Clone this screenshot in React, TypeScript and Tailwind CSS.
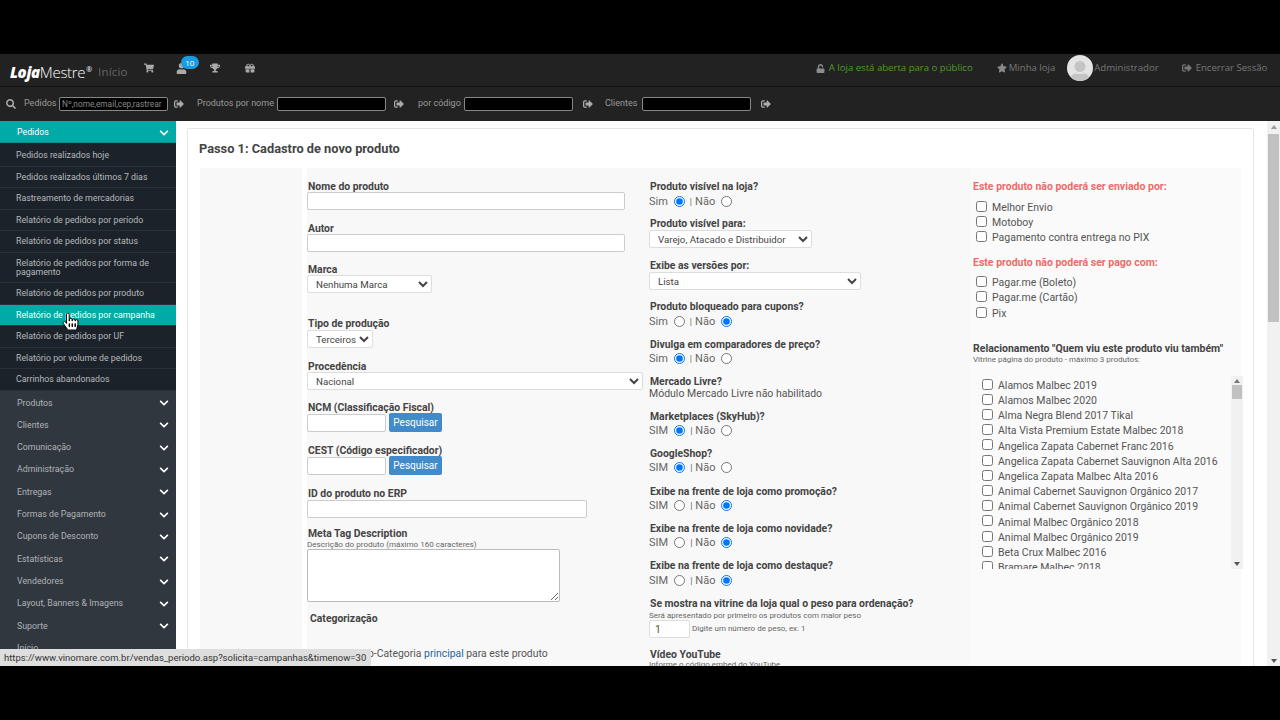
import React from "react";
import { FaShoppingCart, FaTrophy, FaGift, FaUser, FaUnlock, FaStar, FaSearch, FaSignOutAlt, FaChevronDown, FaHandPointer } from "react-icons/fa";

const subItems: [string, string][] = [
  ["Pedidos realizados hoje", "h-[22px]"],
  ["Pedidos realizados últimos 7 dias", "h-[21px]"],
  ["Rastreamento de mercadorias", "h-[22px]"],
  ["Relatório de pedidos por período", "h-[21px]"],
  ["Relatório de pedidos por status", "h-[22px]"],
  ["Relatório de pedidos por forma de pagamento", "h-[30px]"],
  ["Relatório de pedidos por produto", "h-[22px]"],
  ["Relatório de pedidos por campanha", "h-[21px]"],
  ["Relatório de pedidos por UF", "h-[22px]"],
  ["Relatório por volume de pedidos", "h-[21px]"],
  ["Carrinhos abandonados", "h-[22px]"],
];
const cats = ["Produtos", "Clientes", "Comunicação", "Administração", "Entregas", "Formas de Pagamento", "Cupons de Desconto", "Estatísticas", "Vendedores", "Layout, Banners & Imagens", "Suporte"];
const products = ["Alamos Malbec 2019", "Alamos Malbec 2020", "Alma Negra Blend 2017 Tikal", "Alta Vista Premium Estate Malbec 2018", "Angelica Zapata Cabernet Franc 2016", "Angelica Zapata Cabernet Sauvignon Alta 2016", "Angelica Zapata Malbec Alta 2016", "Animal Cabernet Sauvignon Orgânico 2017", "Animal Cabernet Sauvignon Orgânico 2019", "Animal Malbec Orgânico 2018", "Animal Malbec Orgânico 2019", "Beta Crux Malbec 2016", "Bramare Malbec 2018"];

function Label({ children }: { children: React.ReactNode }) {
  return <div className="h-[12px] pt-[1px] pl-[1px] box-content -mb-[1px] leading-[12px] text-[10.4px] font-bold text-[#444] whitespace-nowrap">{children}</div>;
}
function TextBox({ w, cls = "" }: { w: string; cls?: string }) {
  return <input className={`block h-[18px] ${w} ${cls} bg-white border border-[#ccc] rounded-[2px]`} />;
}
function Sel({ w, text, cls = "" }: { w: string; text: string; cls?: string }) {
  return (
    <select className={`block h-[18px] ${w} ${cls} bg-white rounded-[2px] border border-[#ddd] text-[9.7px] text-[#444] pl-[4px]`}>
      <option>{text}</option>
    </select>
  );
}
function Radio({ label, name, first, rowCls }: { label: string; name: string; first: boolean; rowCls: string }) {
  return (
    <div className={`flex items-center h-[15px] text-[11px] text-[#666] ${rowCls}`}>
      <span>{label}</span>
      <input type="radio" name={name} defaultChecked={first} className="w-[11px] h-[11px] ml-[6px] mr-[5px] mb-[3px]" />
      <span className="text-[9px] mr-[3px]">|</span>
      <span>Não</span>
      <input type="radio" name={name} defaultChecked={!first} className="w-[11px] h-[11px] ml-[6px] mb-[3px]" />
    </div>
  );
}
function Check({ label }: { label: string }) {
  return (
    <div className="flex items-center h-[15.2px] text-[10.5px] text-[#555] whitespace-nowrap">
      <input type="checkbox" className="w-[11px] h-[11px] ml-[3px] mr-[5px] mb-[3px]" />
      <span>{label}</span>
    </div>
  );
}
function Go({ cls = "" }: { cls?: string }) {
  return <FaSignOutAlt className={`text-[10px] text-[#aaa] ${cls}`} />;
}

export default function App() {
  return (
    <div className="relative w-[1280px] h-[720px] bg-black pt-[54px] pb-[54px] overflow-hidden font-['Roboto',sans-serif]">
      <div className="h-[33px] pb-[4px] bg-[#222] border-b border-[#111] flex items-center font-['Open_Sans',sans-serif]">
        <div className="ml-[10px] mt-[8px] w-[82px] text-[15px] leading-none text-white whitespace-nowrap tracking-[-0.3px]">
          <b className="italic font-extrabold">Loja</b><span className="font-light">Mestre</span><sup className="text-[7px] -top-[6px] ml-[1px]">®</sup>
        </div>
        <span className="ml-[6px] mt-[8px] text-[11.5px] text-[#666] tracking-[0.2px]">Início</span>
        <FaShoppingCart className="ml-[16px] text-[10px] text-[#aaa]" />
        <div className="relative ml-[22px]">
          <FaUser className="text-[11px] text-[#aaa]" />
          <span className="absolute -top-[7px] left-[5px] w-[18px] h-[13px] rounded-full bg-[#1b9ce2] text-white text-[8px] leading-[13px] text-center">10</span>
        </div>
        <FaTrophy className="ml-[23px] text-[10px] text-[#aaa]" />
        <FaGift className="ml-[25px] text-[10px] text-[#aaa]" />
        <FaUnlock className="ml-[561px] text-[9px] text-[#8c8c8c]" />
        <span className="ml-[4px] text-[9.6px] text-[#4f9a2a] whitespace-nowrap">A loja está aberta para o público</span>
        <FaStar className="ml-[24px] text-[10px] text-[#888]" />
        <span className="ml-[2px] text-[9.6px] text-[#777] whitespace-nowrap">Minha loja</span>
        <div className="ml-[12px] w-[26px] h-[26px] rounded-full bg-[#e4e4e4] overflow-hidden flex items-end justify-center">
          <FaUser className="text-[22px] text-[#c4c4c4] -mb-[2px]" />
        </div>
        <span className="ml-[1px] text-[9.6px] text-[#777]">Administrador</span>
        <FaSignOutAlt className="ml-[23px] text-[10px] text-[#777]" />
        <span className="ml-[4px] text-[9.6px] text-[#777] whitespace-nowrap">Encerrar Sessão</span>
      </div>

      <div className="h-[34px] bg-[#222] flex items-center text-[9px] text-[#999]">
        <FaSearch className="ml-[6px] text-[10px] text-[#aaa]" />
        <span className="ml-[8px] w-[35px]">Pedidos</span>
        <input readOnly value="Nº,nome,email,cep,rastrear" className="w-[109px] h-[14px] bg-black border border-[#888] rounded-[2px] text-[8.3px] text-[#888] px-[2px]" />
        <Go cls="ml-[6px]" />
        <span className="ml-[13px] w-[80px]">Produtos por nome</span>
        <input className="w-[109px] h-[14px] bg-black border border-[#888] rounded-[2px]" />
        <Go cls="ml-[8px]" />
        <span className="ml-[14px] w-[46px]">por código</span>
        <input className="w-[109px] h-[14px] bg-black border border-[#888] rounded-[2px]" />
        <Go cls="ml-[10px]" />
        <span className="ml-[12px] w-[37px]">Clientes</span>
        <input className="w-[109px] h-[14px] bg-black border border-[#888] rounded-[2px]" />
        <Go cls="ml-[10px]" />
      </div>

      <div className="flex h-[545px] overflow-hidden">
        <aside className="w-[176px] bg-[#30373e] overflow-hidden text-[8.8px]">
          <div className="h-[22px] pt-[3px] bg-[#00aaa6] border-b border-[#0a8c88] flex items-center justify-between pl-[17px] pr-[7px] text-white">
            <span>Pedidos</span>
            <FaChevronDown className="text-[10px]" />
          </div>
          <div className="bg-[#1c2229] pt-[2px]">
            {subItems.map(([t, h]) => (
              <div key={t} className={`${h} flex items-center pl-[16px] pr-[14px] leading-[9px] border-b border-[#2a3038] ${t.endsWith("campanha") ? "bg-[#00aaa6] text-white" : "text-[#b5b9bc]"}`}>
                {t}
              </div>
            ))}
          </div>
          <div className="pt-[1px]">
            {cats.map((c) => (
              <div key={c} className="h-[22.3px] flex items-center justify-between pl-[17px] pr-[7px] text-[#b0b4b8]">
                <span>{c}</span>
                <FaChevronDown className="text-[10px] text-white" />
              </div>
            ))}
            <div className="h-[22px] flex items-center pl-[17px] text-[#b0b4b8]">Início</div>
          </div>
        </aside>

        <main className="w-[1091px] bg-white pl-[11px] pr-[13px] pt-[7px]">
          <div className="h-[600px] border border-[#e6e6e6] rounded-[2px] bg-white pl-[12px] pr-[12px]">
            <h1 className="pt-[12px] h-[39px] -ml-[1px] text-[12.8px] leading-[15px] font-bold text-[#444]">Passo 1: Cadastro de novo produto</h1>
            <div className="flex h-[520px]">
              <div className="w-[102px] bg-[#f8f8f8] mr-[5px]" />
              <div className="w-[342px] bg-[#f8f8f8] pt-[12px] text-[#444]">
                <Label>Nome do produto</Label>
                <TextBox w="w-[318px]" />
                <div className="mt-[12px]"><Label>Autor</Label></div>
                <TextBox w="w-[318px]" />
                <div className="mt-[11px]"><Label>Marca</Label></div>
                <Sel w="w-[125px]" text="Nenhuma Marca" />
                <div className="mt-[24px]"><Label>Tipo de produção</Label></div>
                <Sel w="w-[66px]" text="Terceiros" cls="mt-[1px]" />
                <div className="mt-[12px]"><Label>Procedência</Label></div>
                <Sel w="w-[336px]" text="Nacional" />
                <div className="mt-[11px]"><Label>NCM (Classificação Fiscal)</Label></div>
                <div className="flex items-center h-[19px]">
                  <TextBox w="w-[79px]" />
                  <button className="ml-[3px] w-[53px] h-[19px] rounded-[2px] bg-[#428bca] text-white text-[10px]">Pesquisar</button>
                </div>
                <div className="mt-[12px]"><Label>CEST (Código especificador)</Label></div>
                <div className="flex items-center h-[19px]">
                  <TextBox w="w-[79px]" />
                  <button className="ml-[3px] w-[53px] h-[19px] rounded-[2px] bg-[#428bca] text-white text-[10px]">Pesquisar</button>
                </div>
                <div className="mt-[12px]"><Label>ID do produto no ERP</Label></div>
                <TextBox w="w-[280px]" cls="mt-[1px]" />
                <div className="mt-[9px]"><Label>Meta Tag Description</Label></div>
                <div className="h-[10px] leading-[10px] text-[8.1px] text-[#666]">Descrição do produto (máximo 160 caracteres)</div>
                <textarea className="block w-[253px] h-[53px] bg-white border border-[#bbb] rounded-[2px]" />
                <div className="mt-[10px] ml-[3px] h-[13px] leading-[13px] text-[10.4px] font-bold text-[#444]">Categorização</div>
                <div className="mt-[22px] ml-[3px] h-[14px] leading-[14px] text-[10.4px] text-[#555] whitespace-nowrap">
                  Marque a Sub-Categoria <span className="text-[#2a6496]">principal</span> para este produto
                </div>
              </div>
              <div className="w-[322px] bg-[#f8f8f8] pt-[12px]">
                <Label>Produto visível na loja?</Label>
                <Radio label="Sim" name="a" first={true} rowCls="mt-[3px]" />
                <div className="mt-[7px]"><Label>Produto visível para:</Label></div>
                <Sel w="w-[163px]" text="Varejo, Atacado e Distribuidor" cls="mt-[1px]" />
                <div className="mt-[11px]"><Label>Exibe as versões por:</Label></div>
                <Sel w="w-[212px]" text="Lista" cls="mt-[1px]" />
                <div className="mt-[10px]"><Label>Produto bloqueado para cupons?</Label></div>
                <Radio label="Sim" name="b" first={false} rowCls="mt-[3px]" />
                <div className="mt-[8px]"><Label>Divulga em comparadores de preço?</Label></div>
                <Radio label="Sim" name="c" first={true} rowCls="mt-[2px]" />
                <div className="mt-[8px]"><Label>Mercado Livre?</Label></div>
                <div className="mt-[1px] h-[12px] leading-[12px] text-[10.5px] text-[#555]">Módulo Mercado Livre não habilitado</div>
                <div className="mt-[10px]"><Label>Marketplaces (SkyHub)?</Label></div>
                <Radio label="SIM" name="d" first={true} rowCls="mt-[2px]" />
                <div className="mt-[8px]"><Label>GoogleShop?</Label></div>
                <Radio label="SIM" name="e" first={true} rowCls="mt-[2px]" />
                <div className="mt-[9px]"><Label>Exibe na frente de loja como promoção?</Label></div>
                <Radio label="SIM" name="f" first={false} rowCls="mt-[2px]" />
                <div className="mt-[8px]"><Label>Exibe na frente de loja como novidade?</Label></div>
                <Radio label="SIM" name="g" first={false} rowCls="mt-[2px]" />
                <div className="mt-[8px]"><Label>Exibe na frente de loja como destaque?</Label></div>
                <Radio label="SIM" name="h" first={false} rowCls="mt-[3px]" />
                <div className="mt-[8px]"><Label>Se mostra na vitrine da loja qual o peso para ordenação?</Label></div>
                <div className="mt-[2px] h-[9px] leading-[9px] text-[8px] text-[#666] whitespace-nowrap">Será apresentado por primeiro os produtos com maior peso</div>
                <div className="flex items-center h-[18px]">
                  <input readOnly value="1" className="w-[41px] h-[18px] bg-white border border-[#ddd] rounded-[2px] text-[10.5px] text-[#555] pl-[5px]" />
                  <span className="ml-[2px] text-[8px] text-[#666] whitespace-nowrap">Digite um número de peso, ex: 1</span>
                </div>
                <div className="mt-[10px]"><Label>Vídeo YouTube</Label></div>
                <div className="h-[10px] leading-[10px] text-[8px] text-[#666]">Informe o código embed do YouTube</div>
              </div>
              <div className="w-[270px] bg-[#fafafa] pt-[12px] pl-[2px]">
                <div className="h-[13px] leading-[13px] text-[10.5px] font-bold text-[#ee6a6a] whitespace-nowrap">Este produto não poderá ser enviado por:</div>
                <div className="mt-[7px]">
                  <Check label="Melhor Envio" />
                  <Check label="Motoboy" />
                  <Check label="Pagamento contra entrega no PIX" />
                </div>
                <div className="mt-[10px] h-[13px] leading-[13px] text-[10.5px] font-bold text-[#ee6a6a] whitespace-nowrap">Este produto não poderá ser pago com:</div>
                <div className="mt-[7px]">
                  <Check label="Pagar.me (Boleto)" />
                  <Check label="Pagar.me (Cartão)" />
                  <Check label="Pix" />
                </div>
                <div className="mt-[21px] h-[13px] leading-[13px] text-[10.5px] font-bold text-[#444] whitespace-nowrap">Relacionamento "Quem viu este produto viu também"</div>
                <div className="h-[10px] leading-[10px] text-[8px] text-[#666]">Vitrine página do produto - máximo 3 produtos:</div>
                <div className="mt-[11px] h-[193px] w-[270px] flex overflow-hidden">
                  <div className="flex-1 pt-[2px] pl-[6px] overflow-hidden">
                    {products.map((p) => <Check key={p} label={p} />)}
                  </div>
                  <div className="w-[12px] bg-[#f1f1f1] flex flex-col items-center justify-between pt-[3px] pb-[3px]">
                    <div className="w-0 h-0 border-x-[3px] border-x-transparent border-b-[4px] border-b-[#777]" />
                    <div className="w-[10px] h-[14px] bg-[#c1c1c1] mb-auto mt-[2px]" />
                    <div className="w-0 h-0 border-x-[3px] border-x-transparent border-t-[4px] border-t-[#555]" />
                  </div>
                </div>
              </div>
            </div>
          </div>
        </main>

        <div className="w-[13px] bg-[#f1f1f1] flex flex-col items-center pt-[4px] pb-[3px]">
          <div className="w-0 h-0 border-x-[3px] border-x-transparent border-b-[4px] border-b-[#999]" />
          <div className="w-[11px] h-[188px] bg-[#c1c1c1] mt-[5px] mb-auto" />
          <div className="w-0 h-0 border-x-[3px] border-x-transparent border-t-[4px] border-t-[#555]" />
        </div>
      </div>

      <div className="absolute left-0 top-[649px] w-[371px] h-[17px] bg-[#dedede] rounded-tr-[2px] pl-[4px] text-[9.5px] leading-[17px] text-[#333] whitespace-nowrap">
        https://www.vinomare.com.br/vendas_periodo.asp?solicita=campanhas&amp;timenow=30
      </div>
      <FaHandPointer className="absolute left-[62px] top-[313px] text-[17px] text-white" stroke="#000" strokeWidth={30} />
    </div>
  );
}
